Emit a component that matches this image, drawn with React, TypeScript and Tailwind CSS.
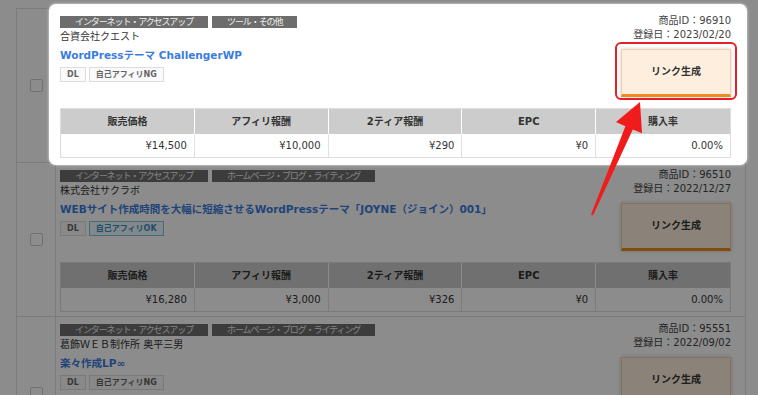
type Product = {
  tags: string[];
  company: string;
  title: string;
  selfOk: boolean;
  id: string;
  date: string;
  price: string;
  affiliate: string;
  tier: string;
  epc: string;
  rate: string;
};

const products: Product[] = [
  {
    tags: ["インターネット・アクセスアップ", "ツール・その他"],
    company: "合資会社クエスト",
    title: "WordPressテーマ ChallengerWP",
    selfOk: false,
    id: "96910",
    date: "2023/02/20",
    price: "¥14,500",
    affiliate: "¥10,000",
    tier: "¥290",
    epc: "¥0",
    rate: "0.00%",
  },
  {
    tags: ["インターネット・アクセスアップ", "ホームページ・ブログ・ライティング"],
    company: "株式会社サクラボ",
    title: "WEBサイト作成時間を大幅に短縮させるWordPressテーマ「JOYNE（ジョイン）001」",
    selfOk: true,
    id: "96510",
    date: "2022/12/27",
    price: "¥16,280",
    affiliate: "¥3,000",
    tier: "¥326",
    epc: "¥0",
    rate: "0.00%",
  },
  {
    tags: ["インターネット・アクセスアップ", "ホームページ・ブログ・ライティング"],
    company: "葛飾ＷＥＢ制作所 奥平三男",
    title: "楽々作成LP∞",
    selfOk: false,
    id: "95551",
    date: "2022/09/02",
    price: "¥9,800",
    affiliate: "¥2,000",
    tier: "¥196",
    epc: "¥0",
    rate: "0.00%",
  },
];

const headers = ["販売価格", "アフィリ報酬", "2ティア報酬", "EPC", "購入率"];

function ProductBody({
  product,
  showTable = true,
}: {
  product: Product;
  showTable?: boolean;
}) {
  const values = [
    product.price,
    product.affiliate,
    product.tier,
    product.epc,
    product.rate,
  ];
  return (
    <div className="w-[689px] h-[153px] pl-[4px] pr-[14px] text-[#333]">
      <div className="flex h-[95px]">
        <div className="flex-1 pt-[7px]">
          <div className="flex gap-[4px]">
            {product.tags.map((tag) => (
              <span
                key={tag}
                className="h-[12px] px-[15px] bg-[#6d6d6d] text-[#f0f0f0] text-[9px] tracking-[-1.1px] leading-[12px]"
              >
                {tag}
              </span>
            ))}
          </div>
          <div className="mt-[2px] text-[10px] leading-[14px]">
            {product.company}
          </div>
          <div className="mt-[2px] text-[10.5px] leading-[18px] font-bold text-[#3b7ddd] whitespace-nowrap">
            {product.title}
          </div>
          <div className="mt-[3px] flex gap-[3px] text-[8px] font-bold leading-[13px]">
            <span className="h-[15px] px-[6px] border border-[#dddddd] bg-[#fafafa] text-[#666]">
              DL
            </span>
            {product.selfOk ? (
              <span className="h-[15px] px-[6px] border border-[#7cc3dc] bg-[#eef8fc] text-[#3a8fc4]">
                自己アフィリOK
              </span>
            ) : (
              <span className="h-[15px] px-[6px] border border-[#dddddd] bg-[#fafafa] text-[#666]">
                自己アフィリNG
              </span>
            )}
          </div>
        </div>
        <div className="flex flex-col items-end pt-[5px] text-[10px] leading-[14px] text-[#444]">
          <span>商品ID：{product.id}</span>
          <span>登録日：{product.date}</span>
          <button className="mt-[7px] w-[110px] h-[48px] bg-[#fdeedd] border border-[#f1cfa8] border-b-[3px] border-b-[#f08c1e] text-[10px] font-bold text-[#333] shadow-[0_0_4px_rgba(0,0,0,0.2)]">
            リンク生成
          </button>
        </div>
      </div>
      {showTable && (
        <div className="mt-[4px] border border-[#dddddd]">
          <div className="grid grid-cols-5 bg-[#cccccc] divide-x divide-white">
            {headers.map((h) => (
              <div
                key={h}
                className="h-[25px] flex items-center justify-center text-[10px] font-bold"
              >
                {h}
              </div>
            ))}
          </div>
          <div className="grid grid-cols-5 bg-white divide-x divide-[#e2e2e2]">
            {values.map((v, i) => (
              <div
                key={i}
                className="h-[23px] flex items-center justify-end pr-[7px] text-[10px]"
              >
                {v}
              </div>
            ))}
          </div>
        </div>
      )}
    </div>
  );
}

function ProductRow({
  product,
  showTable,
}: {
  product: Product;
  showTable: boolean;
}) {
  return (
    <div className="flex h-[154px] border-b border-[#e0e0e0]">
      <div className="w-[39px] shrink-0 border-r border-[#e0e0e0] flex items-center justify-center">
        <span className="size-[13px] border border-[#cccccc] rounded-[2px] bg-white" />
      </div>
      <ProductBody product={product} showTable={showTable} />
    </div>
  );
}

export default function App() {
  return (
    <div className="relative w-[758px] h-[395px] overflow-hidden bg-white font-['DejaVu_Sans','Noto_Sans_CJK_JP',sans-serif]">
      <div className="pt-[8px] pl-4">
        <div className="w-[730px] border-t border-l border-r border-[#e0e0e0]">
          {products.map((p, i) => (
            <ProductRow key={p.id} product={p} showTable={i < 2} />
          ))}
        </div>
      </div>

      <div className="absolute inset-0 bg-black/45" />

      <div className="absolute left-[49px] top-[4px] w-[698px] h-[161px] pl-[7px] pt-[5px] bg-white rounded-[7px] shadow-[0_0_3px_rgba(255,255,255,0.8)] overflow-hidden">
        <ProductBody product={products[0]} />
      </div>

      <div className="absolute left-[615px] top-[42px] w-[122px] h-[58px] border-2 border-[#e4202a] rounded-[6px]" />

      <svg
        className="absolute inset-0 pointer-events-none"
        width="758"
        height="395"
        viewBox="0 0 758 395"
      >
        <polygon
          points="640,102 616,122 625.4,126.2 591,214.6 593,215.4 632.8,129.4 642,133.3"
          fill="#f01c1c"
        />
      </svg>
    </div>
  );
}
